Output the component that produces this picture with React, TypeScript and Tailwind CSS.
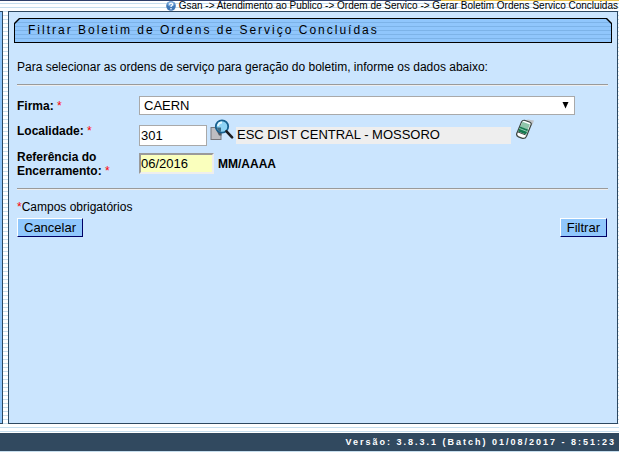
import { useState } from 'react';

const stripes =
    'bg-[repeating-linear-gradient(to_bottom,#ffffff_0px,#ffffff_3px,#c6deee_3px,#c6deee_4px)]';

const crumbs = ['Gsan', 'Atendimento ao Publico', 'Ordem de Servico', 'Gerar Boletim Ordens Servico Concluidas'];

const buttonStyle =
    'h-[19px] px-[6px] text-[13px] leading-[16px] bg-[#90c7fc] border border-t-white border-l-white border-r-[#000066] border-b-[#000066]';

function Required() {
    return <span className="font-normal text-[#ff0000]">*</span>;
}

function HelpIcon() {
    return (
        <svg width="10" height="10" viewBox="0 0 10 10" aria-hidden="true">
            <circle cx="5" cy="5" r="4.8" fill="#3f78b8" />
            <ellipse cx="5" cy="3" rx="3.6" ry="2.4" fill="#7faddd" />
            <path d="M3.5 3.7c0-2.2 3.2-2 3.1-.2C6.5 4.7 5 4.6 5 6" fill="none" stroke="#fff" strokeWidth="1.2" />
            <circle cx="5" cy="7.7" r=".8" fill="#fff" />
        </svg>
    );
}

function SearchIcon() {
    return (
        <svg width="24" height="22" viewBox="0 0 24 22" aria-hidden="true">
            <rect x="1" y="8.5" width="10" height="12" fill="#bdbdc2" stroke="#77777c" />
            <path d="M5 8.5h6.500v8H9z" fill="#4b5865" />
            <circle cx="12" cy="7.5" r="6.2" fill="#8ed3f5" stroke="#17608f" strokeWidth="1.8" />
            <path d="M8 7a4 4 0 0 1 4-3.5" fill="none" stroke="#e3f7ff" strokeWidth="1.8" />
            <path d="M6.8 8.5h4.200v4.200c-2 0-3.700-1.700-4.200-4.200z" fill="#3f6c88" />
            <path d="M16.5 12.300l5.600 6" stroke="#1c1c20" strokeWidth="2.6" strokeLinecap="round" />
        </svg>
    );
}

function EraserIcon() {
    return (
        <svg width="20" height="21" viewBox="0 0 20 21" aria-hidden="true">
            <path d="M9 2l4-1.500 6 1-1 3-3 4z" fill="#bfc3c8" />
            <path d="M6.500 3Q7.500 1 9.500 1.300l5.500 2q1.800.8 1 2.700l-4.500 11.200q-1.200 2.700-4 2.200l-4-1.500q-2.800-1.500-1.500-4z" fill="#fff" stroke="#3c4642" strokeWidth="1.200" />
            <path d="M7.500 2.800l7.500 2.700-2.200 5-7.600-2.800z" fill="#8fc5aa" />
            <path d="M5.200 7.500l7.900 3-2 4.900-7.900-3z" fill="#147a50" />
            <path d="M4.500 9.500l7.600 3" stroke="#a4d8bf" strokeWidth=".9" />
            <path d="M3 13l7.500 2.900" stroke="#26332d" strokeWidth=".9" />
        </svg>
    );
}

function TitleBar() {
    return (
        <div className="bg-black p-px [clip-path:polygon(5px_0,calc(100%-5px)_0,100%_5px,100%_100%,0_100%,0_5px)]">
            <h1 className="h-[23px] pl-[13px] text-[12px] leading-[22px] tracking-[2px] bg-[repeating-linear-gradient(to_bottom,#90c6fc_0px,#90c6fc_3px,#7db3e8_3px,#7db3e8_4px)] [clip-path:polygon(5px_0,calc(100%-5px)_0,100%_5px,100%_100%,0_100%,0_5px)]">
                Filtrar Boletim de Ordens de Serviço Concluídas
            </h1>
        </div>
    );
}

export default function App() {
    const [firma, setFirma] = useState('CAERN');
    const [localidade, setLocalidade] = useState('301');
    const [descricao, setDescricao] = useState('ESC DIST CENTRAL - MOSSORO');
    const [referencia, setReferencia] = useState('06/2016');

    const limparLocalidade = () => {
        setLocalidade('');
        setDescricao('');
    };

    return (
        <div className={`flex min-h-screen flex-col font-['Liberation_Sans',Arial,sans-serif] text-[12px] text-black ${stripes}`}>
            {/* Top rule and breadcrumb */}
            <div className="flex h-px">
                <div className="w-[441px] bg-[#30406a]" />
                <div className="flex-1 bg-[#e8c04c]" />
            </div>
            <nav className="flex h-[10px] items-center justify-end gap-[3px] pr-px text-[10px] leading-[10px] whitespace-nowrap">
                <HelpIcon />
                <span>{crumbs.join(' -> ')}</span>
            </nav>

            <div className="flex flex-1 gap-[5px] pr-px">
                {/* Edge of the side menu */}
                <aside className="w-[3px] border-t border-r border-b border-[#2d4861] bg-[#90c7fc]" />

                <main className="flex-1 border border-[#2d4861] bg-[#cbe5fe] px-[5px] pt-[6px]">
                    <TitleBar />
                    <form className="px-[3px]" onSubmit={(e) => e.preventDefault()}>
                        <p className="mt-[17px] leading-[14px]">
                            Para selecionar as ordens de serviço para geração do boletim, informe os dados abaixo:
                        </p>
                        <hr className="mt-[10px] mr-px h-[2px] border-t border-b border-t-[#9a9a9a] border-b-[#eeeeee]" />

                        <div className="mt-[10px] grid grid-cols-[122px_1fr] items-center">
                            <label htmlFor="firma" className="font-bold">
                                Firma: <Required />
                            </label>
                            <div className="relative mr-[34px]">
                                <select
                                    id="firma"
                                    value={firma}
                                    onChange={(e) => setFirma(e.target.value)}
                                    className="block h-[19px] w-full appearance-none border border-[#a9a9a9] bg-white pl-[4px] text-[13px] leading-[16px]"
                                >
                                    <option>CAERN</option>
                                </select>
                                <svg className="pointer-events-none absolute top-[6px] right-[6px]" width="7" height="7" viewBox="0 0 7 7" aria-hidden="true">
                                    <path d="M.5 0h6l-3 6.500z" />
                                </svg>
                            </div>

                            <label htmlFor="localidade" className="font-bold">
                                Localidade: <Required />
                            </label>
                            <div className="flex h-[32px] items-center">
                                <input
                                    id="localidade"
                                    value={localidade}
                                    onChange={(e) => setLocalidade(e.target.value)}
                                    className="mt-[8px] h-[21px] w-[68px] border border-[#a9a9a9] bg-white px-px text-[13px]"
                                />
                                <button type="button" aria-label="Pesquisar localidade" className="mb-[2px] ml-[3px]">
                                    <SearchIcon />
                                </button>
                                <input
                                    readOnly
                                    aria-label="Descrição da localidade"
                                    value={descricao}
                                    className="mt-[8px] ml-[2px] h-[17px] w-[275px] bg-[#eeeeee] px-px text-[13px]"
                                />
                                <button type="button" aria-label="Limpar localidade" onClick={limparLocalidade} className="mb-[4px] ml-[4px]">
                                    <EraserIcon />
                                </button>
                            </div>

                            <label htmlFor="referencia" className="pr-[20px] leading-[14px] font-bold">
                                Referência do Encerramento: <Required />
                            </label>
                            <div className="flex h-[33px] items-center gap-[4px]">
                                <input
                                    id="referencia"
                                    value={referencia}
                                    onChange={(e) => setReferencia(e.target.value)}
                                    className="h-[21px] w-[75px] border-2 border-t-[#9a9a9a] border-l-[#9a9a9a] border-r-[#eeeeee] border-b-[#eeeeee] bg-[#faffbd] text-[13px]"
                                />
                                <strong>MM/AAAA</strong>
                            </div>
                        </div>

                        <hr className="mt-[8px] mr-px h-[2px] border-t border-b border-t-[#9a9a9a] border-b-[#eeeeee]" />
                        <p className="mt-[10px] leading-[14px]">
                            <Required />
                            Campos obrigatórios
                        </p>
                        <div className="mt-[4px] mr-[2px] flex justify-between">
                            <button type="button" className={buttonStyle}>Cancelar</button>
                            <button type="submit" className={buttonStyle}>Filtrar</button>
                        </div>
                    </form>
                </main>
            </div>

            <footer className="mt-[9px] mb-[2px] h-[18px] bg-[#31495f] pr-[3px] text-right text-[9px] leading-[18px] font-bold tracking-[2px] text-white">
                Versão: 3.8.3.1 (Batch) 01/08/2017 - 8:51:23
            </footer>
        </div>
    );
}
